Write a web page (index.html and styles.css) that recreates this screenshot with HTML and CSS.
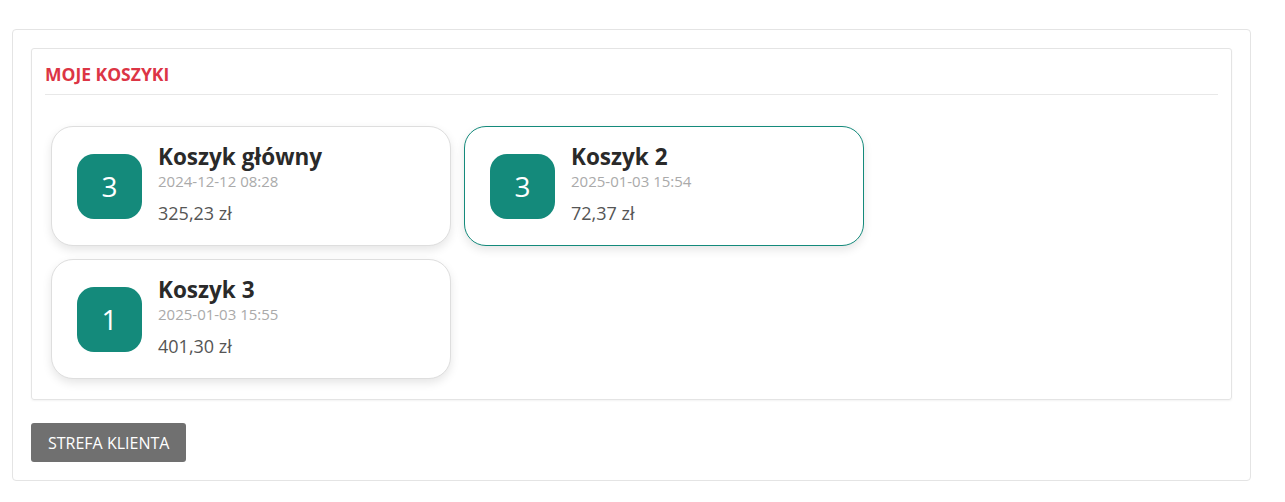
FILE: index.html
```html
<!DOCTYPE html>
<html lang="pl">
<head>
    <meta charset="UTF-8">
    <meta name="viewport" content="width=device-width, initial-scale=1.0">
    <title>Moje koszyki</title>
    <link rel="stylesheet" href="styles.css">
</head>
<body>
  <div class="panel">
    <div class="box">
        <h3 class="box-title">MOJE KOSZYKI</h3>
        <div class="koszyki">
            <div class="koszyk">
                <div class="ilosc">3</div>
                <div class="info">
                    <div class="nazwa">Koszyk główny</div>
                    <div class="data">2024-12-12 08:28</div>
                    <div class="cena">325,23 zł</div>
                </div>
            </div>
            <div class="koszyk aktywny">
                <div class="ilosc">3</div>
                <div class="info">
                    <div class="nazwa">Koszyk 2</div>
                    <div class="data">2025-01-03 15:54</div>
                    <div class="cena">72,37 zł</div>
                </div>
            </div>
            <div class="koszyk">
                <div class="ilosc">1</div>
                <div class="info">
                    <div class="nazwa">Koszyk 3</div>
                    <div class="data">2025-01-03 15:55</div>
                    <div class="cena">401,30 zł</div>
                </div>
            </div>
        </div>
    </div>
    <button type="button" class="btn">STREFA KLIENTA</button>
  </div>
</body>
</html>
```

FILE: styles.css
```css
body {
    font-family: "Open Sans", Arial, sans-serif;
    margin: 0;
    padding: 29px 34px 21px 12px;
    background-color: white;
    color: #333;
}
.panel {
    border: 1px solid #e4e4e4;
    border-radius: 4px;
    padding: 18px;
}
.box {
    border: 1px solid #e4e4e4;
    border-radius: 3px;
    padding: 14px 13px 13px;
    box-shadow: 0 1px 2px rgba(0, 0, 0, 0.05);
}
.box-title {
    margin: 0;
    padding-bottom: 8px;
    border-bottom: 1px solid #e8e8e8;
    font-size: 17.5px;
    line-height: 23px;
    font-weight: bold;
    color: #dc3545;
}
.koszyki {
    display: flex;
    flex-wrap: wrap;
    gap: 13px 13px;
    padding: 31px 6px 7px;
    width: 813px;
}
.koszyk {
    box-sizing: border-box;
    width: 400px;
    height: 120px;
    display: flex;
    align-items: center;
    gap: 16px;
    padding: 0 25px;
    background-color: white;
    border: 1px solid #dedede;
    border-radius: 22px;
    box-shadow: 0 4px 10px rgba(0, 0, 0, 0.1);
}
.koszyk.aktywny {
    border-color: #148a7b;
}
.ilosc {
    width: 65px;
    height: 65px;
    flex-shrink: 0;
    display: flex;
    align-items: center;
    justify-content: center;
    background-color: #148a7b;
    border-radius: 17px;
    color: white;
    font-size: 28px;
}
.info {
    padding-bottom: 3px;
}
.nazwa {
    font-size: 22.5px;
    line-height: 26px;
    font-weight: bold;
    color: #2a2a2a;
}
.data {
    font-size: 15px;
    line-height: 23px;
    color: #aaa;
}
.cena {
    margin-top: 8px;
    font-size: 18px;
    line-height: 24px;
    color: #555;
}
.btn {
    margin-top: 23px;
    height: 39px;
    padding: 0 17px;
    background-color: #707070;
    color: white;
    border: none;
    border-radius: 3px;
    font-family: "Open Sans", Arial, sans-serif;
    font-size: 16px;
    cursor: pointer;
}
```
